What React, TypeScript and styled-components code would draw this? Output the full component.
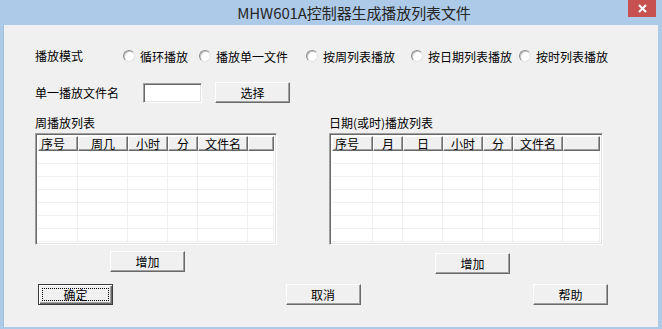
import React from "react";
import styled, { createGlobalStyle, css } from "styled-components";

const GlobalStyle = createGlobalStyle`
  html, body {
    margin: 0;
    padding: 0;
    width: 662px;
    height: 329px;
    overflow: hidden;
  }
  body {
    font-family: "Noto Sans CJK SC", "Liberation Sans", sans-serif;
    font-size: 12px;
    color: #000;
  }
`;

const cjk = `"Noto Sans CJK SC", "Liberation Sans", sans-serif`;

const Window = styled.div`
  width: 662px;
  height: 329px;
  background-color: #adcae8;
  display: flex;
  flex-direction: column;
  box-sizing: border-box;
`;

const TitleBar = styled.div`
  position: relative;
  height: 25px;
  flex: none;
  display: flex;
  align-items: center;
  justify-content: center;
  padding-left: 46px;
  box-sizing: border-box;
`;

const Title = styled.span`
  font-family: ${cjk};
  font-size: 15px;
  color: #262626;
  letter-spacing: -0.1px;
  margin-top: -1px;
`;

const CloseButton = styled.div`
  position: absolute;
  top: 0;
  right: 6px;
  width: 28px;
  height: 17px;
  background-color: #c75050;
  display: flex;
  align-items: center;
  justify-content: center;
`;

const Client = styled.div`
  margin: 0 4px 2px 3px;
  flex: 1;
  background-color: #f0f0f0;
  border-left: 1px solid #a4bfdc;
  box-sizing: border-box;
  padding: 23px 0 0 31px;
  display: flex;
  flex-direction: column;
`;

const Row = styled.div<{ $top?: number; $height?: number }>`
  display: flex;
  align-items: center;
  margin-top: ${(p) => p.$top ?? 0}px;
  height: ${(p) => p.$height ?? 16}px;
`;

const Label = styled.span<{ $width?: number }>`
  width: ${(p) => (p.$width ? `${p.$width}px` : "auto")};
  flex: none;
  white-space: nowrap;
  line-height: 14px;
`;

const Radio = styled.label<{ $width?: number }>`
  display: flex;
  align-items: center;
  gap: 5px;
  width: ${(p) => (p.$width ? `${p.$width}px` : "auto")};
  flex: none;
  white-space: nowrap;
`;

const RadioDot = styled.span`
  width: 10px;
  height: 10px;
  border-radius: 50%;
  background: radial-gradient(circle at 60% 60%, #ffffff 55%, #e6e6e6 100%);
  border: 1px solid;
  border-color: #8c8c8c #e4e4e4 #e4e4e4 #8c8c8c;
  box-shadow: inset 1px 1px 0 #c4c4c4;
  flex: none;
`;

const sunken = css`
  border: 1px solid;
  border-color: #a0a0a0 #ffffff #ffffff #a0a0a0;
  box-shadow: inset 1px 1px 0 #696969, inset -1px -1px 0 #e3e3e3;
  box-sizing: border-box;
`;

const TextBox = styled.div`
  ${sunken}
  width: 59px;
  height: 20px;
  background: #fff;
  flex: none;
`;

const Button = styled.button<{ $default?: boolean }>`
  position: relative;
  width: 75px;
  height: 21px;
  flex: none;
  padding: 0;
  font-family: ${cjk};
  font-size: 12px;
  color: #000;
  background-color: #f0f0f0;
  border: 1px solid;
  border-color: #ffffff #696969 #696969 #ffffff;
  box-shadow: inset -1px -1px 0 #a0a0a0;
  box-sizing: border-box;
  ${(p) =>
    p.$default &&
    css`
      box-shadow: inset 1px 1px 0 #ffffff, inset -1px -1px 0 #696969,
        inset -2px -2px 0 #a0a0a0;
      border-color: #3c3c3c;
      &::after {
        content: "";
        position: absolute;
        top: 3px;
        left: 3px;
        right: 3px;
        bottom: 3px;
        border: 1px dotted #000;
      }
    `}
`;

const ListsRow = styled.div`
  display: flex;
  margin-top: 13px;
`;

const ListColumn = styled.div<{ $width: number }>`
  width: ${(p) => p.$width}px;
  flex: none;
  display: flex;
  flex-direction: column;
`;

const ListLabel = styled.div`
  line-height: 14px;
  height: 14px;
  margin-bottom: 3px;
  white-space: nowrap;
`;

const Table = styled.div<{ $width: number }>`
  ${sunken}
  width: ${(p) => p.$width}px;
  height: 112px;
  background: #fff;
  padding: 2px;
  overflow: hidden;
  display: flex;
  flex-direction: column;
`;

const HeaderRow = styled.div`
  display: flex;
  height: 15px;
  flex: none;
`;

const HeaderCell = styled.div<{ $width?: number; $left?: boolean }>`
  width: ${(p) => (p.$width ? `${p.$width}px` : "auto")};
  flex: ${(p) => (p.$width ? "none" : "1")};
  box-sizing: border-box;
  background: #f0f0f0;
  border-top: 1px solid #fff;
  border-left: 1px solid #fff;
  border-right: 1px solid #696969;
  border-bottom: 1px solid #696969;
  box-shadow: inset -1px -1px 0 #a0a0a0;
  line-height: 13px;
  text-align: ${(p) => (p.$left ? "left" : "center")};
  padding-left: ${(p) => (p.$left ? "2px" : "0")};
  white-space: nowrap;
  overflow: hidden;
`;

const BodyRow = styled.div`
  display: flex;
  height: 13px;
  flex: none;
  border-bottom: 1px solid #f0f0f0;
  box-sizing: border-box;
`;

const BodyCell = styled.div<{ $width?: number }>`
  width: ${(p) => (p.$width ? `${p.$width}px` : "auto")};
  flex: ${(p) => (p.$width ? "none" : "1")};
  border-right: 1px solid #f0f0f0;
  box-sizing: border-box;
`;

const AddRow = styled.div<{ $top: number; $left: number }>`
  margin-top: ${(p) => p.$top}px;
  padding-left: ${(p) => p.$left}px;
  display: flex;
`;

const BottomRow = styled.div`
  display: flex;
  justify-content: space-between;
  width: 570px;
  margin-left: 3px;
  margin-top: 10px;
`;

const SelectButton = styled(Button)`
  margin-left: 13px;
`;

interface Column {
  name: string;
  width?: number;
}

const weekColumns: Column[] = [
  { name: "序号", width: 40 },
  { name: "周几", width: 50 },
  { name: "小时", width: 40 },
  { name: "分", width: 30 },
  { name: "文件名", width: 50 },
  { name: "" },
];

const dateColumns: Column[] = [
  { name: "序号", width: 41 },
  { name: "月", width: 30 },
  { name: "日", width: 40 },
  { name: "小时", width: 40 },
  { name: "分", width: 30 },
  { name: "文件名", width: 50 },
  { name: "" },
];

function ListTable({ columns, width }: { columns: Column[]; width: number }) {
  const rows = Array.from({ length: 8 });
  return (
    <Table $width={width}>
      <HeaderRow>
        {columns.map((c, i) => (
          <HeaderCell key={i} $width={c.width} $left={i === 0}>
            {c.name}
          </HeaderCell>
        ))}
      </HeaderRow>
      {rows.map((_, r) => (
        <BodyRow key={r}>
          {columns.map((c, i) => (
            <BodyCell key={i} $width={c.width} />
          ))}
        </BodyRow>
      ))}
    </Table>
  );
}

const modes = [
  { text: "循环播放", width: 76 },
  { text: "播放单一文件", width: 107 },
  { text: "按周列表播放", width: 105 },
  { text: "按日期列表播放", width: 108 },
  { text: "按时列表播放" },
];

export default function App() {
  return (
    <>
      <GlobalStyle />
      <Window>
        <TitleBar>
          <Title>MHW601A控制器生成播放列表文件</Title>
          <CloseButton>
            <svg width="9" height="9" viewBox="0 0 9 9">
              <path d="M1 1 L8 8 M8 1 L1 8" stroke="#fff" strokeWidth="2" />
            </svg>
          </CloseButton>
        </TitleBar>
        <Client>
          <Row $height={16}>
            <Label $width={88}>播放模式</Label>
            {modes.map((m) => (
              <Radio key={m.text} $width={m.width}>
                <RadioDot />
                {m.text}
              </Radio>
            ))}
          </Row>
          <Row $top={18} $height={21}>
            <Label $width={108}>单一播放文件名</Label>
            <TextBox />
            <SelectButton>选择</SelectButton>
          </Row>
          <ListsRow>
            <ListColumn $width={294}>
              <ListLabel>周播放列表</ListLabel>
              <ListTable columns={weekColumns} width={242} />
              <AddRow $top={6} $left={75}>
                <Button>增加</Button>
              </AddRow>
            </ListColumn>
            <ListColumn $width={280}>
              <ListLabel>日期(或时)播放列表</ListLabel>
              <ListTable columns={dateColumns} width={274} />
              <AddRow $top={8} $left={106}>
                <Button>增加</Button>
              </AddRow>
            </ListColumn>
          </ListsRow>
          <BottomRow>
            <Button $default>确定</Button>
            <Button>取消</Button>
            <Button>帮助</Button>
          </BottomRow>
        </Client>
      </Window>
    </>
  );
}
